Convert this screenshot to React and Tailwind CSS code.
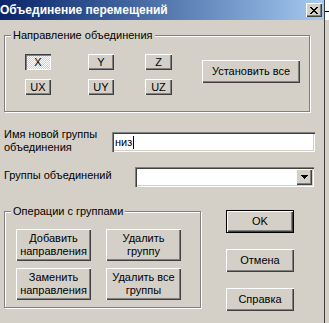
import React from "react";

const raised =
  "bg-[#d4d0c8] shadow-[inset_1px_1px_0_#fff,inset_-1px_-1px_0_#404040,inset_-2px_-2px_0_#808080]";
const pressed =
  "bg-[image:repeating-conic-gradient(#fff_0_25%,#d4d0c8_0_50%)] bg-size-[2px_2px] shadow-[inset_1px_1px_0_#404040,inset_2px_2px_0_#808080,inset_-1px_-1px_0_#fff]";
const sunken =
  "bg-white shadow-[inset_1px_1px_0_#808080,inset_2px_2px_0_#404040,inset_-1px_-1px_0_#fff,inset_-2px_-2px_0_#d4d0c8]";
const etched = "border border-[#808080] shadow-[inset_1px_1px_0_#fff,1px_1px_0_#fff]";

const Btn = ({ children, className = "", down = false, isDefault = false }) => (
  <button
    className={`flex items-center justify-center text-center leading-[13px] ${
      down ? pressed : raised
    } ${isDefault ? "border border-black" : ""} ${className}`}
  >
    {children}
  </button>
);

const CloseGlyph = () => (
  <svg width="8" height="7" viewBox="0 0 8 7" shapeRendering="crispEdges">
    <path
      d="M0 0h2v1h1v1h2v-1h1v-1h2v1h-1v1h-1v1h-1v1h1v1h1v1h1v1h-2v-1h-1v-1h-2v1h-1v1h-2v-1h1v-1h1v-1h1v-1h-1v-1h-1v-1h-1z"
      fill="#000"
    />
  </svg>
);

const ArrowDown = () => (
  <svg width="7" height="4" viewBox="0 0 7 4" shapeRendering="crispEdges">
    <path d="M0 0h7v1h-1v1h-1v1h-1v1h-1v-1h-1v-1h-1v-1h-1z" fill="#000" />
  </svg>
);

const GroupBox = ({ title, className = "", children }) => (
  <div className={`relative ${etched} ${className}`}>
    <span className="absolute -top-[7px] left-[6px] px-[2px] bg-[#d4d0c8] whitespace-nowrap">
      {title}
    </span>
    {children}
  </div>
);

export default function App() {
  return (
    <div className="flex w-[329px] h-[323px] overflow-hidden bg-[#d4d0c8] text-black text-[11px] leading-[13px] font-['Liberation_Sans',Arial,sans-serif]">
      <div className="w-[324px] flex flex-col">
        {/* заголовок окна */}
        <div className="h-[20px] flex items-center justify-between pr-[2px] bg-linear-to-r from-[#0a246a] to-[#a6caf0]">
          <span className="text-white font-bold text-[12px] whitespace-nowrap">
            Объединение перемещений
          </span>
          <button className={`w-[16px] h-[14px] flex items-center justify-center ${raised}`}>
            <CloseGlyph />
          </button>
        </div>

        {/* направление объединения */}
        <GroupBox
          title="Направление объединения"
          className="mt-[15px] ml-[4px] w-[306px] h-[77px] pl-[20px] pt-[18px]"
        >
          <div className="flex items-start">
            <div className="grid grid-cols-[63px_57px_27px] gap-y-[9px]">
              <Btn down className="w-[26px] h-[16px]">X</Btn>
              <Btn className="w-[26px] h-[16px]">Y</Btn>
              <Btn className="w-[27px] h-[16px]">Z</Btn>
              <Btn className="w-[26px] h-[16px]">UX</Btn>
              <Btn className="w-[26px] h-[16px]">UY</Btn>
              <Btn className="w-[27px] h-[16px]">UZ</Btn>
            </div>
            <Btn className="ml-[30px] mt-[6px] w-[98px] h-[23px]">Установить все</Btn>
          </div>
        </GroupBox>

        {/* имя группы */}
        <div className="flex items-start mt-[16px] pl-[4px]">
          <div className="w-[108px]">
            Имя новой группы
            <br />
            объединения
          </div>
          <div className={`mt-[4px] w-[203px] h-[20px] flex items-center pl-[3px] ${sunken}`}>
            <span>низ</span>
            <span className="ml-[1px] w-[1px] h-[13px] bg-black" />
          </div>
        </div>

        {/* группы объединений */}
        <div className="flex items-start mt-[13px] pl-[4px]">
          <div className="w-[131px] mt-[2px]">Группы объединений</div>
          <div className={`w-[179px] h-[20px] flex items-center justify-end pr-[2px] ${sunken}`}>
            <div className={`w-[16px] h-[16px] flex items-center justify-center ${raised}`}>
              <ArrowDown />
            </div>
          </div>
        </div>

        {/* операции */}
        <div className="flex items-start mt-[23px] pl-[4px]">
          <GroupBox
            title="Операции с группами"
            className="mt-[1px] w-[197px] h-[97px] pl-[11px] pt-[17px]"
          >
            <div className="grid grid-cols-[75px_75px] gap-x-[15px] gap-y-[7px]">
              <Btn className="h-[32px]">
                Добавить
                <br />
                направления
              </Btn>
              <Btn className="h-[32px]">
                Удалить
                <br />
                группу
              </Btn>
              <Btn className="h-[32px]">
                Заменить
                <br />
                направления
              </Btn>
              <Btn className="h-[32px]">
                Удалить все
                <br />
                группы
              </Btn>
            </div>
          </GroupBox>
          <div className="ml-[25px] flex flex-col gap-[16px]">
            <Btn isDefault className="w-[68px] h-[23px]">OK</Btn>
            <Btn className="w-[68px] h-[23px]">Отмена</Btn>
            <Btn className="w-[68px] h-[23px]">Справка</Btn>
          </div>
        </div>
      </div>

      {/* край окна */}
      <div className="w-[5px] flex flex-col border-l border-[#404040]">
        <div className="h-[20px] bg-white">
          <div className="mt-[11px] h-[1px] bg-black" />
        </div>
      </div>
    </div>
  );
}
